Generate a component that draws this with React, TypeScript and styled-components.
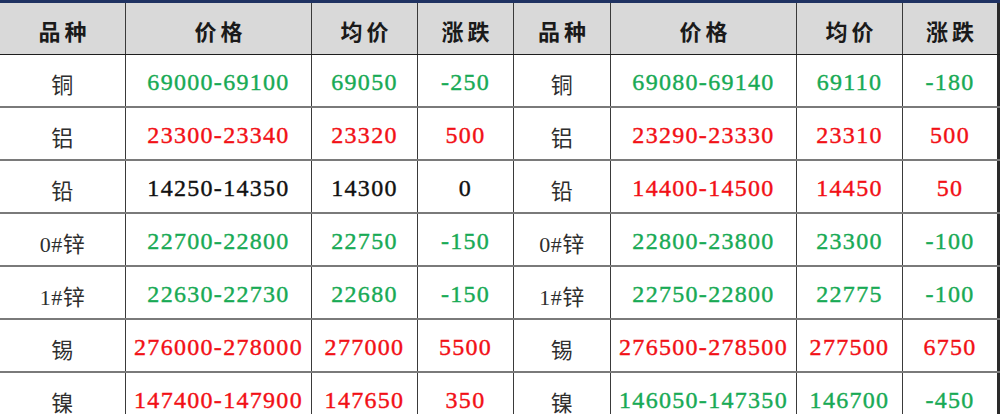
import styled, { createGlobalStyle } from "styled-components";

const GlobalStyle = createGlobalStyle`
  html, body {
    margin: 0;
    padding: 0;
    background: #ffffff;
  }
`;

type Tone = "green" | "red" | "black" | "name";

const COLUMNS = "126px 186px 106px 96px 97px 186px 106px 97px";

const Sheet = styled.div`
  width: 1000px;
  height: 414px;
  overflow: hidden;
  border-top: 3px solid #1f3262;
  box-sizing: border-box;
`;

const HeaderRow = styled.div`
  display: grid;
  grid-template-columns: ${COLUMNS};
  height: 52px;
  background: #d9d9d9;
  border-bottom: 1px solid #1e1e1e;
  box-sizing: border-box;
`;

const Row = styled.div`
  display: grid;
  grid-template-columns: ${COLUMNS};
  height: 53px;
  border-bottom: 2px solid #7a7a7a;
  box-sizing: border-box;
  background: #ffffff;
`;

const HeadCell = styled.div<{ $last?: boolean }>`
  display: flex;
  align-items: center;
  justify-content: center;
  border-right: ${(p) => (p.$last ? "3px solid #2a2a2a" : "1px solid #3a3a3a")};
  font-family: "Noto Sans CJK SC", sans-serif;
  font-weight: 700;
  font-size: 22px;
  letter-spacing: 4px;
  padding-left: 4px;
  padding-top: 2px;
  color: #1a1a1a;
`;

const colors: Record<Tone, string> = {
  green: "#18aa55",
  red: "#f21016",
  black: "#111111",
  name: "#2e2e2e",
};

const Cell = styled.div<{ $tone: Tone; $last?: boolean }>`
  display: flex;
  align-items: center;
  justify-content: center;
  border-right: ${(p) => (p.$last ? "3px solid #2a2a2a" : "1px solid #3a3a3a")};
  color: ${(p) => colors[p.$tone]};
  font-family: ${(p) =>
    p.$tone === "name"
      ? `"Liberation Serif", "Noto Sans CJK SC", serif`
      : `"Liberation Serif", serif`};
  font-size: ${(p) => (p.$tone === "name" ? "22px" : "24px")};
  font-weight: 400;
  -webkit-text-stroke: ${(p) => (p.$tone === "name" ? "0" : "0.4px currentColor")};
  letter-spacing: ${(p) => (p.$tone === "name" ? "0.5px" : "1.3px")};
  padding-top: 4px;
  white-space: nowrap;
`;

const headers = ["品种", "价格", "均价", "涨跌", "品种", "价格", "均价", "涨跌"];

type Side = { name: string; range: string; avg: string; diff: string; tone: Tone };

const G: Tone = "green";
const R: Tone = "red";
const K: Tone = "black";

const rows: [Side, Side][] = [
  [
    { name: "铜", range: "69000-69100", avg: "69050", diff: "-250", tone: G },
    { name: "铜", range: "69080-69140", avg: "69110", diff: "-180", tone: G },
  ],
  [
    { name: "铝", range: "23300-23340", avg: "23320", diff: "500", tone: R },
    { name: "铝", range: "23290-23330", avg: "23310", diff: "500", tone: R },
  ],
  [
    { name: "铅", range: "14250-14350", avg: "14300", diff: "0", tone: K },
    { name: "铅", range: "14400-14500", avg: "14450", diff: "50", tone: R },
  ],
  [
    { name: "0#锌", range: "22700-22800", avg: "22750", diff: "-150", tone: G },
    { name: "0#锌", range: "22800-23800", avg: "23300", diff: "-100", tone: G },
  ],
  [
    { name: "1#锌", range: "22630-22730", avg: "22680", diff: "-150", tone: G },
    { name: "1#锌", range: "22750-22800", avg: "22775", diff: "-100", tone: G },
  ],
  [
    { name: "锡", range: "276000-278000", avg: "277000", diff: "5500", tone: R },
    { name: "锡", range: "276500-278500", avg: "277500", diff: "6750", tone: R },
  ],
  [
    { name: "镍", range: "147400-147900", avg: "147650", diff: "350", tone: R },
    { name: "镍", range: "146050-147350", avg: "146700", diff: "-450", tone: G },
  ],
];

export default function App() {
  return (
    <>
      <GlobalStyle />
      <Sheet>
        <HeaderRow>
          {headers.map((h, i) => (
            <HeadCell key={i} $last={i === headers.length - 1}>
              {h}
            </HeadCell>
          ))}
        </HeaderRow>
        {rows.map((pair, i) => (
          <Row key={i}>
            {pair.map((s, j) => [
              <Cell key={`n${j}`} $tone="name">
                {s.name}
              </Cell>,
              <Cell key={`r${j}`} $tone={s.tone}>
                {s.range}
              </Cell>,
              <Cell key={`a${j}`} $tone={s.tone}>
                {s.avg}
              </Cell>,
              <Cell key={`d${j}`} $tone={s.tone} $last={j === 1}>
                {s.diff}
              </Cell>,
            ])}
          </Row>
        ))}
      </Sheet>
    </>
  );
}
